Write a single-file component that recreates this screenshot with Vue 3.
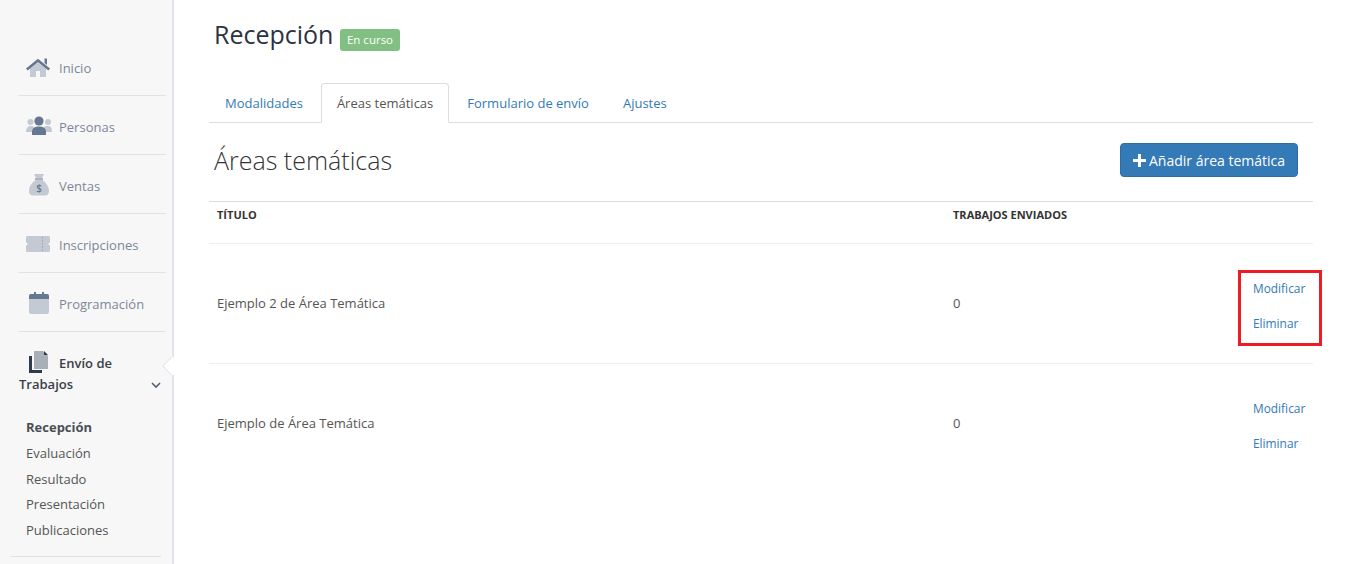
<script setup>
const areas = [
  { name: 'Ejemplo 2 de Área Temática', count: 0, marked: true },
  { name: 'Ejemplo de Área Temática', count: 0, marked: false }
]
const sub = ['Recepción', 'Evaluación', 'Resultado', 'Presentación', 'Publicaciones']
const tabs = ['Modalidades', 'Áreas temáticas', 'Formulario de envío', 'Ajustes']
</script>

<template>
  <div class="page">
    <aside class="side">
      <nav class="nav">
        <a class="item">
          <svg class="ic" viewBox="0 0 26 20" width="26" height="20"><path fill="#c3cad4" d="M4 11.500 12 5.500l8 6V20h-6v-6h-4v6H4z"/><path fill="none" stroke="#66788f" stroke-width="2.6" d="M.8 12.500 12 3.500l11.200 9"/><path fill="#66788f" d="M18.500 1.500H21V8l-2.500-2z"/></svg>
          <span>Inicio</span>
        </a>
        <a class="item">
          <svg class="ic" viewBox="0 0 26 20" width="26" height="20"><circle cx="4.500" cy="6" r="3" fill="#c3cad4"/><circle cx="22" cy="6" r="3" fill="#c3cad4"/><path fill="#c3cad4" d="M0 16c0-4 2-6 5-6s5 2 5 6zM16 16c0-4 2-6 5.500-6s4.500 2 4.500 6z"/><circle cx="13" cy="5" r="4.600" fill="#66788f"/><path fill="#66788f" d="M6 19v-3c0-4 3-5.500 7-5.500S20 12 20 16v3z"/></svg>
          <span>Personas</span>
        </a>
        <a class="item">
          <svg class="ic" viewBox="0 0 26 22" width="26" height="22"><path fill="#c3cad4" d="M8 0h10l-2 4h-6zM9.500 6h7c4 3 6.500 7 6.500 11 0 3-1.500 4.500-4 4.500H7c-2.500 0-4-1.500-4-4.500 0-4 2.500-8 6.500-11z"/><rect x="9" y="4.300" width="8" height="1.400" fill="#8a97a8"/><text x="13" y="18" text-anchor="middle" font-size="10" font-weight="600" fill="#66788f" font-family="Open Sans">$</text></svg>
          <span>Ventas</span>
        </a>
        <a class="item">
          <svg class="ic" viewBox="0 0 26 20" width="26" height="20"><path fill="#c3cad4" d="M1.500 2h21a1.500 1.500 0 0 1 1.500 1.500v5a1.500 1.500 0 0 0 0 3v5a1.500 1.500 0 0 1-1.500 1.500h-21A1.500 1.500 0 0 1 0 16.500v-5a1.500 1.500 0 0 0 0-3v-5A1.500 1.500 0 0 1 1.500 2z"/><path stroke="#a59bb0" stroke-dasharray="1.500 1.500" d="M16.500 3v14"/></svg>
          <span>Inscripciones</span>
        </a>
        <a class="item">
          <svg class="ic" viewBox="0 0 26 22" width="26" height="22"><rect x="3" y="2" width="20" height="20" rx="2" fill="#c3cad4"/><path fill="#66788f" d="M3 4a2 2 0 0 1 2-2h16a2 2 0 0 1 2 2v3H3z"/><rect x="8" y="0" width="2" height="4" fill="#66788f"/><rect x="16" y="0" width="2" height="4" fill="#66788f"/></svg>
          <span>Programación</span>
        </a>
        <div class="item open">
          <div class="open-title">
            <svg class="ic ic-doc" viewBox="0 0 20 22" width="20" height="22"><path fill="#2e3a4e" d="M0 5h3v14h10v3H0z"/><path fill="#a9afb7" d="M5 0h9l5 5v13H5z"/><path fill="#2e3a4e" d="M15 0l4 4h-4z"/></svg>
            <span>Envío de Trabajos</span>
          </div>
          <svg class="chev" viewBox="0 0 10 7" width="10" height="7"><path d="M1 1l4 4 4-4" fill="none" stroke="#55606e" stroke-width="1.600"/></svg>
        </div>
        <ul class="sub">
          <li v-for="(s, i) in sub" :key="s" :class="{ cur: i === 0 }">{{ s }}</li>
        </ul>
        <div class="sub-rule"></div>
      </nav>
      <i class="notch"></i>
    </aside>

    <main class="main">
      <header class="title-row">
        <h1>Recepción</h1>
        <span class="badge">En curso</span>
      </header>

      <div class="tabs">
        <a v-for="(t, i) in tabs" :key="t" class="tab" :class="{ active: i === 1 }">{{ t }}</a>
      </div>

      <div class="head-row">
        <h2>Áreas temáticas</h2>
        <button class="add" type="button">
          <svg viewBox="0 0 13 13" width="13" height="13"><path d="M5 0h3v5h5v3H8v5H5V8H0V5h5z" fill="#fff"/></svg>
          <span>Añadir área temática</span>
        </button>
      </div>

      <table class="grid">
        <thead>
          <tr>
            <th class="c1">TÍTULO</th>
            <th>TRABAJOS ENVIADOS</th>
            <th class="c3"></th>
          </tr>
        </thead>
        <tbody>
          <tr v-for="a in areas" :key="a.name">
            <td>{{ a.name }}</td>
            <td class="num">{{ a.count }}</td>
            <td class="acts">
              <div class="links" :class="{ marked: a.marked }">
                <a>Modificar</a>
                <a>Eliminar</a>
              </div>
            </td>
          </tr>
        </tbody>
      </table>
    </main>
  </div>
</template>

<style>
html, body { margin: 0; background: #fff; overflow: hidden; }
</style>

<style scoped>
.page {
  display: flex;
  height: 564px;
  overflow: hidden;
  font-family: "Open Sans", sans-serif;
  font-size: 13px;
  color: #555;
}
.side {
  position: relative;
  box-sizing: border-box;
  width: 174px;
  flex: none;
  background: #f7f7f7;
  border-right: 2px solid #e2e6ec;
  padding-top: 37px;
}
.nav { display: flex; flex-direction: column; }
.item {
  box-sizing: border-box;
  display: flex;
  align-items: center;
  gap: 7px;
  height: 59px;
  margin: 0 6px 0 19px;
  padding: 4px 0 0 7px;
  border-bottom: 1px solid #dfe3e9;
  color: #7c8799;
}
.ic { flex: none; margin-top: -3px; }
.open {
  position: relative;
  display: block;
  height: 75px;
  padding: 19px 0 0;
  border: 0;
  color: #3a3f47;
  font-weight: 600;
  line-height: 21px;
}
.open-title { padding-right: 20px; }
.ic-doc { vertical-align: -5px; margin: 0 10px 0 10px; }
.chev { position: absolute; right: 5px; top: 50px; }
.sub {
  list-style: none;
  margin: 0;
  padding: 8px 0 0 26px;
  color: #555;
  line-height: 25.800px;
}
.cur { font-weight: 700; color: #4a4f55; }
.sub-rule { height: 1px; margin: 12px 11px 0 11px; background: #dfe3e9; }
.notch {
  position: absolute;
  top: 359px;
  right: -2px;
  width: 14px;
  height: 14px;
  box-sizing: border-box;
  background: #fff;
  border-left: 1px solid #e2e6ec;
  border-bottom: 1px solid #e2e6ec;
  transform: translateX(5px) rotate(45deg);
}
.main { flex: 1; box-sizing: border-box; padding: 0 33px 0 35px; min-width: 0; }
.title-row { display: flex; align-items: center; height: 83px; padding: 0 0 15px 5px; box-sizing: border-box; }
h1 { margin: 0; font-size: 25px; font-weight: 400; color: #2c3340; line-height: 70px; }
.badge {
  margin: 11px 0 0 7px;
  background: #82bf82;
  color: #fff;
  font-size: 11.500px;
  line-height: 22px;
  height: 22px;
  padding: 0 6.500px;
  border-radius: 3px;
}
.tabs { display: flex; gap: 2px; height: 39px; border-bottom: 1px solid #ddd; }
.tab {
  box-sizing: border-box;
  height: 40px;
  padding: 10px 15px 0;
  line-height: 18px;
  color: #337ab7;
  border: 1px solid transparent;
  border-radius: 4px 4px 0 0;
}
.active { border-color: #ddd; border-bottom-color: #fff; color: #555; background: #fff; }
.head-row {
  display: flex;
  align-items: center;
  justify-content: space-between;
  height: 78px;
  box-sizing: border-box;
  padding: 0 15px 4px 5px;
}
h2 { margin: 0; font-size: 25px; font-weight: 300; color: #333; line-height: 34px; }
.add {
  display: flex;
  align-items: center;
  gap: 3px;
  height: 34px;
  width: 178px;
  padding: 0 0 0 12px;
  box-sizing: border-box;
  background: #337ab7;
  border: 1px solid #2e6da4;
  border-radius: 4px;
  color: #fff;
  font: 400 14px "Open Sans", sans-serif;
}
.grid { width: 100%; border-collapse: collapse; table-layout: fixed; }
th {
  height: 42px;
  padding: 0 8px 17px;
  box-sizing: border-box;
  border-top: 1px solid #ddd;
  text-align: left;
  font-size: 11px;
  font-weight: 700;
  color: #333;
}
.c1 { width: 736px; }
.c3 { width: 116px; }
td {
  height: 120px;
  padding: 0 8px 2px;
  box-sizing: border-box;
  border-top: 1px solid #eee;
  color: #555;
  vertical-align: middle;
}
.num { color: #555; }
.acts { padding: 4px 0 0; }
.links {
  position: relative;
  display: flex;
  flex-direction: column;
  gap: 17px;
  padding-left: 56px;
  font-size: 11.900px;
  line-height: 18px;
  color: #337ab7;
}
.marked::after {
  content: "";
  position: absolute;
  left: 41px;
  top: -9px;
  width: 84px;
  height: 76px;
  box-sizing: border-box;
  border: 3px solid #ed1c24;
}
</style>
